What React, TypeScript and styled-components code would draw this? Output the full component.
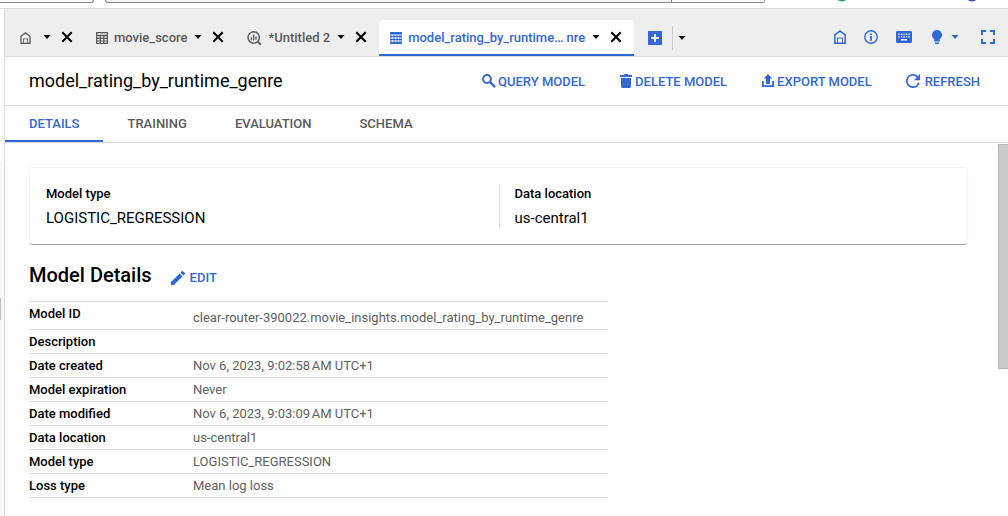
import React from "react";
import styled, { createGlobalStyle } from "styled-components";

const BLUE = "#3367d6";
const LINE = "#dcdcdc";

const GlobalStyle = createGlobalStyle`
  *, *::before, *::after { box-sizing: border-box; }
  html, body { margin: 0; padding: 0; }
  body {
    background: #fff;
    color: #000;
    font-family: Roboto, "Liberation Sans", sans-serif;
    font-size: 13px;
    line-height: 16px;
    overflow: hidden;
  }
`;

const Page = styled.div`
  display: flex;
  flex-direction: column;
  min-height: 100vh;
`;

const BrowserEdge = styled.div`
  display: flex;
  align-items: flex-start;
  height: 9px;
  border-bottom: 1px solid ${LINE};
`;

const SearchBox = styled.div`
  width: 94px;
  height: 3px;
  border: solid #80868b;
  border-width: 0 1px 1px 0;
  border-radius: 0 0 3px 0;
`;

const AddressBox = styled.div`
  display: flex;
  justify-content: flex-end;
  flex: 1;
  height: 3px;
  margin-left: 11px;
  border: solid #80868b;
  border-width: 0 1px 1px 1px;
  border-radius: 0 0 3px 3px;
  background: #f4f4f4;
`;

const AddressEnd = styled.div`
  width: 93px;
  border-left: 1px solid #80868b;
  background: #fff;
`;

const BrowserButtons = styled.div`
  display: flex;
  justify-content: space-between;
  width: 243px;
  padding: 0 30px 0 71px;
`;

const Workspace = styled.div`
  display: flex;
  flex: 1;
`;

const SidePanel = styled.div`
  flex: none;
  width: 5px;
  padding-top: 154px;
  border-right: 1px solid ${LINE};
`;

const SideBody = styled.div`
  height: 100%;
  padding-top: 135px;
  background: #f8f8f8;
`;

const SideHandle = styled.div`
  width: 1px;
  height: 22px;
  background: #bdbdbd;
`;

const Main = styled.main`
  display: flex;
  flex-direction: column;
  flex: 1;
  min-width: 0;
`;

const IconButton = styled.button<{ $black?: boolean; $gap?: number }>`
  display: flex;
  align-items: center;
  gap: ${(p) => p.$gap ?? 0}px;
  padding: 0;
  border: 0;
  background: none;
  color: ${(p) => (p.$black ? "#000" : BLUE)};
  cursor: pointer;
`;

const TabBar = styled.div`
  display: flex;
  align-items: flex-end;
  height: 48px;
  padding-left: 4px;
  border-bottom: 1px solid ${LINE};
  background: #eee;
`;

const Tab = styled.div<{ $active?: boolean }>`
  display: flex;
  align-items: center;
  gap: 10px;
  height: 36px;
  padding: 0 12px 0 11px;
  border-bottom: 2px solid ${(p) => (p.$active ? BLUE : "transparent")};
  border-radius: 4px 4px 0 0;
  background: ${(p) => (p.$active ? "#fff" : "transparent")};
  color: ${(p) => (p.$active ? BLUE : "#5a5a5a")};
`;

const TabTitle = styled.div<{ $wide?: boolean }>`
  display: flex;
  align-items: center;
  gap: ${(p) => (p.$wide ? 12 : 7)}px;
`;

const TabLink = styled.a`
  display: flex;
  align-items: center;
  gap: 6px;
  padding-top: 2px;
  color: inherit;
  font-weight: 500;
  text-decoration: none;
  white-space: nowrap;
`;

const NewTab = styled.div`
  display: flex;
  align-items: center;
  gap: 10px;
  height: 36px;
  padding-left: 14px;
`;

const NewTabMenu = styled.div`
  display: flex;
  align-items: center;
  height: 24px;
  padding-left: 5px;
  border-left: 1px solid #ccc;
`;

const Tools = styled.div`
  display: flex;
  align-items: center;
  gap: 18px;
  height: 36px;
  margin-left: auto;
  padding: 0 13px 2px 0;
`;

const ToolGroup = styled.div`
  padding: 0 4px 0 2px;
`;

const Header = styled.header`
  display: flex;
  align-items: center;
  justify-content: space-between;
  height: 49px;
  padding: 0 28px 0 24px;
  border-bottom: 1px solid ${LINE};
`;

const Title = styled.h1`
  margin: 0;
  font-size: 18px;
  font-weight: 400;
  line-height: 24px;
`;

const Actions = styled.div`
  display: flex;
  gap: 34px;
`;

const Action = styled.button<{ $gap?: number }>`
  display: flex;
  align-items: center;
  gap: ${(p) => p.$gap ?? 2}px;
  padding: 0;
  border: 0;
  background: none;
  color: ${BLUE};
  font: 500 13px/16px Roboto, "Liberation Sans", sans-serif;
  cursor: pointer;
`;

const ActionText = styled.span`
  padding-top: 2px;
`;

const SectionNav = styled.nav`
  display: flex;
  height: 37px;
  border-bottom: 1px solid ${LINE};
`;

const SectionLink = styled.a<{ $active?: boolean }>`
  padding: 10px 24px 0;
  border-bottom: 2px solid ${(p) => (p.$active ? BLUE : "transparent")};
  color: ${(p) => (p.$active ? BLUE : "#5a5a5a")};
  font-weight: 500;
  text-decoration: none;
`;

const ScrollArea = styled.div`
  display: flex;
  flex: 1;
`;

const Content = styled.div`
  flex: 1;
  padding: 25px 30px 17px 24px;
`;

const ScrollTrack = styled.div`
  flex: none;
  width: 10px;
  padding-top: 1px;
`;

const ScrollThumb = styled.div`
  height: 225px;
  border: solid #b4b4b4;
  border-width: 1px 0 1px 1px;
  background: #cbcbcb;
`;

const Card = styled.section`
  display: grid;
  grid-template-columns: 1fr 1fr;
  margin: 0 1px;
  padding: 16px;
  border-radius: 2px;
  box-shadow: 0 1px 0 #a6a6a6, 0 0 2px rgba(0, 0, 0, 0.2);
`;

const Fact = styled.div<{ $divided?: boolean }>`
  height: 44px;
  padding-left: ${(p) => (p.$divided ? 15 : 0)}px;
  border-left: ${(p) => (p.$divided ? `1px solid ${LINE}` : "0")};
`;

const FactLabel = styled.div`
  padding-top: 2px;
  font-weight: 500;
`;

const FactValue = styled.div`
  margin-top: 6px;
  font-size: 15px;
  line-height: 20px;
`;

const DetailsHead = styled.div`
  display: flex;
  align-items: center;
  gap: 19px;
  padding: 19px 0 14px;
`;

const DetailsTitle = styled.h2`
  margin: 0;
  font-size: 20px;
  font-weight: 500;
  line-height: 24px;
`;

const EditSlot = styled.div`
  padding-top: 6px;
`;

const DetailsTable = styled.table`
  width: 100%;
  max-width: 578px;
  border-collapse: separate;
  border-spacing: 0;
  border-top: 1px solid ${LINE};
`;

const Name = styled.th`
  width: 164px;
  height: 24px;
  padding: 4px 0 3px;
  border-bottom: 1px solid ${LINE};
  font-weight: 500;
  text-align: left;
  vertical-align: top;
`;

const Value = styled.td<{ $low?: boolean }>`
  padding: ${(p) => (p.$low ? 8 : 4)}px 0 3px;
  border-bottom: 1px solid ${LINE};
  color: #616161;
  vertical-align: top;
`;

type GlyphProps = { w?: number; h?: number; box?: string; d: string; evenOdd?: boolean };

const Glyph = ({ w = 14, h = 14, box = "0 0 14 14", d, evenOdd }: GlyphProps) => (
  <svg width={w} height={h} viewBox={box} fill="currentColor" fillRule={evenOdd ? "evenodd" : "nonzero"} aria-hidden="true">
    <path d={d} />
  </svg>
);

const Caret = () => <Glyph w={8} h={4} box="0 0 8 4" d="M.5 0h7L4 4z" />;

const Cross = () => (
  <svg width="12" height="12" viewBox="0 0 12 12" fill="none" stroke="currentColor" strokeWidth="2" aria-hidden="true">
    <path d="M1.300 1.300l9.400 9.400M10.700 1.300l-9.400 9.400" />
  </svg>
);

const Home = ({ small }: { small?: boolean }) => (
  <Glyph w={small ? 11 : 12} h={small ? 12 : 14} box="0 0 12 14" evenOdd d="M6 0l6 4.600V14H0V4.600zM6 1.900L1.500 5.300v7.200H3V7.500h6v5h1.500V5.300zM4 8.500v4h4v-4z" />
);

const Grid = () => (
  <Glyph w={12} h={12} box="0 0 12 12" evenOdd d="M0 0h12v12H0zM1.200 1.200v1.600h9.600V1.200zM1.200 4.300v1.500h2.400V4.300zM4.800 4.300v1.500h2.400V4.300zM8.400 4.300v1.500h2.400V4.300zM1.200 6.900v1.500h2.400V6.900zM4.800 6.900v1.500h2.400V6.900zM8.400 6.900v1.500h2.400V6.900zM1.200 9.500v1.300h2.400V9.500zM4.800 9.500v1.300h2.400V9.500zM8.400 9.500v1.300h2.400V9.500z" />
);

const ModelGrid = () => (
  <svg width="12" height="12" viewBox="0 0 12 12" aria-hidden="true">
    <path fill="#8fabe8" d="M0 0h12v12H0z" />
    <path fill={BLUE} d="M0 0h12v2H0zM0 4h12v1H0zM0 7h12v1H0zM0 10h12v2H0z" />
    <path fill="#dfe7f9" d="M2 3h1v1H2zM5 3h1v1H5zM8 3h1v1H8zM2 5h1v2H2zM5 5h1v2H5zM8 5h1v2H8zM2 8h1v2H2zM5 8h1v2H5zM8 8h1v2H8z" />
  </svg>
);

const QueryIcon = () => (
  <svg width="15" height="14" viewBox="0 0 15 14" fill="none" stroke="currentColor" aria-hidden="true">
    <circle cx="6.700" cy="6.500" r="5.700" strokeWidth="1.500" />
    <path d="M10.800 10.600l3 3" strokeWidth="2" />
    <path d="M4.400 6.300v2.900M6.700 3.600v6M9 5.600v3.200" strokeWidth="1.300" />
  </svg>
);

const Plus = () => <Glyph evenOdd d="M.5 0h13a.5.5 0 0 1 .5.5v13a.5.5 0 0 1-.5.5H.5a.5.5 0 0 1-.5-.5V.5A.5.5 0 0 1 .5 0zM6 3v3H3v2h3v3h2V8h3V6H8V3z" />;

const Info = () => (
  <svg width="14" height="14" viewBox="0 0 14 14" fill="none" stroke="currentColor" aria-hidden="true">
    <circle cx="7" cy="7" r="6.200" strokeWidth="1.400" />
    <path d="M7 3.400v1.600M7 6.100v4.600" strokeWidth="1.800" />
  </svg>
);

const Keyboard = () => (
  <Glyph w={16} h={12} box="0 0 16 12" evenOdd d="M1.200 0h13.600A1.200 1.200 0 0 1 16 1.200v9.600a1.200 1.200 0 0 1-1.200 1.200H1.200A1.200 1.200 0 0 1 0 10.800V1.200A1.200 1.200 0 0 1 1.200 0zM2.300 2.500v1.400h1.300V2.500zM4.900 2.500v1.400h1.300V2.500zM7.400 2.500v1.400h1.300V2.500zM9.900 2.500v1.400h1.300V2.500zM12.400 2.500v1.400h1.300V2.500zM2.300 5.100v1.400h1.300V5.100zM4.900 5.100v1.400h1.300V5.100zM7.400 5.100v1.400h1.300V5.100zM9.900 5.100v1.400h1.300V5.100zM12.400 5.100v1.400h1.300V5.100zM5 8v1.600h6V8z" />
);

const Bulb = () => (
  <Glyph w={10} h={14} box="0 0 10 14" d="M5 0a5 5 0 0 1 5 5c0 1.800-.9 3.200-2.200 4.100V10.900a.6.6 0 0 1-.6.6H2.800a.6.6 0 0 1-.6-.6V9.100C.9 8.200 0 6.800 0 5a5 5 0 0 1 5-5zM2.800 12.500h4.400v.7a.8.8 0 0 1-.8.8H3.600a.8.8 0 0 1-.8-.8z" />
);

const Fullscreen = () => <Glyph d="M0 0h5v2H2v3H0zM9 0h5v5h-2V2H9zM0 9h2v3h3v2H0zM12 9h2v5H9v-2h3z" />;

const Search = () => (
  <svg width="14" height="14" viewBox="0 0 14 14" fill="none" stroke="currentColor" strokeWidth="2" aria-hidden="true">
    <circle cx="5" cy="5" r="3.900" />
    <path d="M7.900 7.900l5.200 5.200" strokeWidth="2.200" />
  </svg>
);

const Trash = () => <Glyph d="M1 1h3.600L5.400 0h3.200l.8 1H13v2H1zM2 4h10v8.600a1.400 1.400 0 0 1-1.400 1.400H3.400A1.400 1.400 0 0 1 2 12.600z" />;

const Export = () => <Glyph d="M7 0l4.300 4.500H9V10H5V4.500H2.700zM1 7h1.800v4.200h8.400V7H13v6H1z" />;

const Refresh = () => (
  <Glyph box="4 4 16 16" d="M17.650 6.350A7.958 7.958 0 0 0 12 4a8 8 0 1 0 7.730 10h-2.080A6 6 0 1 1 12 6c1.660 0 3.140.69 4.220 1.780L13 11h7V4l-2.350 2.350z" />
);

const Pencil = () => (
  <Glyph box="3 3 18 18" d="M3 17.250V21h3.750L17.810 9.940l-3.750-3.750L3 17.250zM20.710 7.040a1 1 0 0 0 0-1.410l-2.340-2.340a1 1 0 0 0-1.410 0l-1.830 1.830 3.750 3.750 1.830-1.830z" />
);

const details: { name: string; value: string; low?: boolean }[] = [
  { name: "Model ID", value: "clear-router-390022.movie_insights.model_rating_by_runtime_genre", low: true },
  { name: "Description", value: "" },
  { name: "Date created", value: "Nov 6, 2023, 9:02:58\u202fAM UTC+1" },
  { name: "Model expiration", value: "Never" },
  { name: "Date modified", value: "Nov 6, 2023, 9:03:09\u202fAM UTC+1" },
  { name: "Data location", value: "us-central1" },
  { name: "Model type", value: "LOGISTIC_REGRESSION" },
  { name: "Loss type", value: "Mean log loss" },
];

const EditorTab = ({ icon, label, active }: { icon: React.ReactNode; label?: string; active?: boolean }) => (
  <Tab $active={active}>
    <TabTitle $wide={!label}>
      <TabLink href="#tab" aria-label={label ?? "Home"}>
        {icon}
        {label}
      </TabLink>
      <IconButton $black aria-label="Tab menu">
        <Caret />
      </IconButton>
    </TabTitle>
    <IconButton $black aria-label="Close tab">
      <Cross />
    </IconButton>
  </Tab>
);

export default function App() {
  return (
    <Page>
      <GlobalStyle />
      <BrowserEdge>
        <SearchBox />
        <AddressBox><AddressEnd /></AddressBox>
        <BrowserButtons>
          <svg width="12" height="2" aria-hidden="true"><circle cx="6" cy="-6" r="7.500" fill="#1da462" /></svg>
          <svg width="12" height="2" aria-hidden="true"><circle cx="6" cy="-6" r="7.500" fill="#3050b0" /></svg>
        </BrowserButtons>
      </BrowserEdge>
      <Workspace>
        <SidePanel><SideBody><SideHandle /></SideBody></SidePanel>
        <Main>
          <TabBar>
            <EditorTab icon={<Home small />} />
            <EditorTab icon={<Grid />} label="movie_score" />
            <EditorTab icon={<QueryIcon />} label="*Untitled 2" />
            <EditorTab icon={<ModelGrid />} label="model_rating_by_runtime… nre" active />
            <NewTab>
              <IconButton aria-label="New tab"><Plus /></IconButton>
              <NewTabMenu>
                <IconButton $black aria-label="New tab options"><Caret /></IconButton>
              </NewTabMenu>
            </NewTab>
            <Tools>
              <IconButton aria-label="Home"><Home /></IconButton>
              <IconButton aria-label="Information"><Info /></IconButton>
              <IconButton aria-label="Keyboard shortcuts"><Keyboard /></IconButton>
              <ToolGroup>
                <IconButton $gap={9} aria-label="Tips"><Bulb /><Caret /></IconButton>
              </ToolGroup>
              <IconButton aria-label="Full screen"><Fullscreen /></IconButton>
            </Tools>
          </TabBar>
          <Header>
            <Title>model_rating_by_runtime_genre</Title>
            <Actions>
              <Action><Search /><ActionText>QUERY MODEL</ActionText></Action>
              <Action><Trash /><ActionText>DELETE MODEL</ActionText></Action>
              <Action><Export /><ActionText>EXPORT MODEL</ActionText></Action>
              <Action $gap={5}><Refresh /><ActionText>REFRESH</ActionText></Action>
            </Actions>
          </Header>
          <SectionNav>
            <SectionLink href="#details" $active>DETAILS</SectionLink>
            <SectionLink href="#training">TRAINING</SectionLink>
            <SectionLink href="#evaluation">EVALUATION</SectionLink>
            <SectionLink href="#schema">SCHEMA</SectionLink>
          </SectionNav>
          <ScrollArea>
            <Content>
              <Card>
                <Fact>
                  <FactLabel>Model type</FactLabel>
                  <FactValue>LOGISTIC_REGRESSION</FactValue>
                </Fact>
                <Fact $divided>
                  <FactLabel>Data location</FactLabel>
                  <FactValue>us-central1</FactValue>
                </Fact>
              </Card>
              <DetailsHead>
                <DetailsTitle>Model Details</DetailsTitle>
                <EditSlot>
                  <Action $gap={5}><Pencil />EDIT</Action>
                </EditSlot>
              </DetailsHead>
              <DetailsTable>
                <tbody>
                  {details.map((row) => (
                    <tr key={row.name}>
                      <Name scope="row">{row.name}</Name>
                      <Value $low={row.low}>{row.value}</Value>
                    </tr>
                  ))}
                </tbody>
              </DetailsTable>
            </Content>
            <ScrollTrack><ScrollThumb /></ScrollTrack>
          </ScrollArea>
        </Main>
      </Workspace>
    </Page>
  );
}
